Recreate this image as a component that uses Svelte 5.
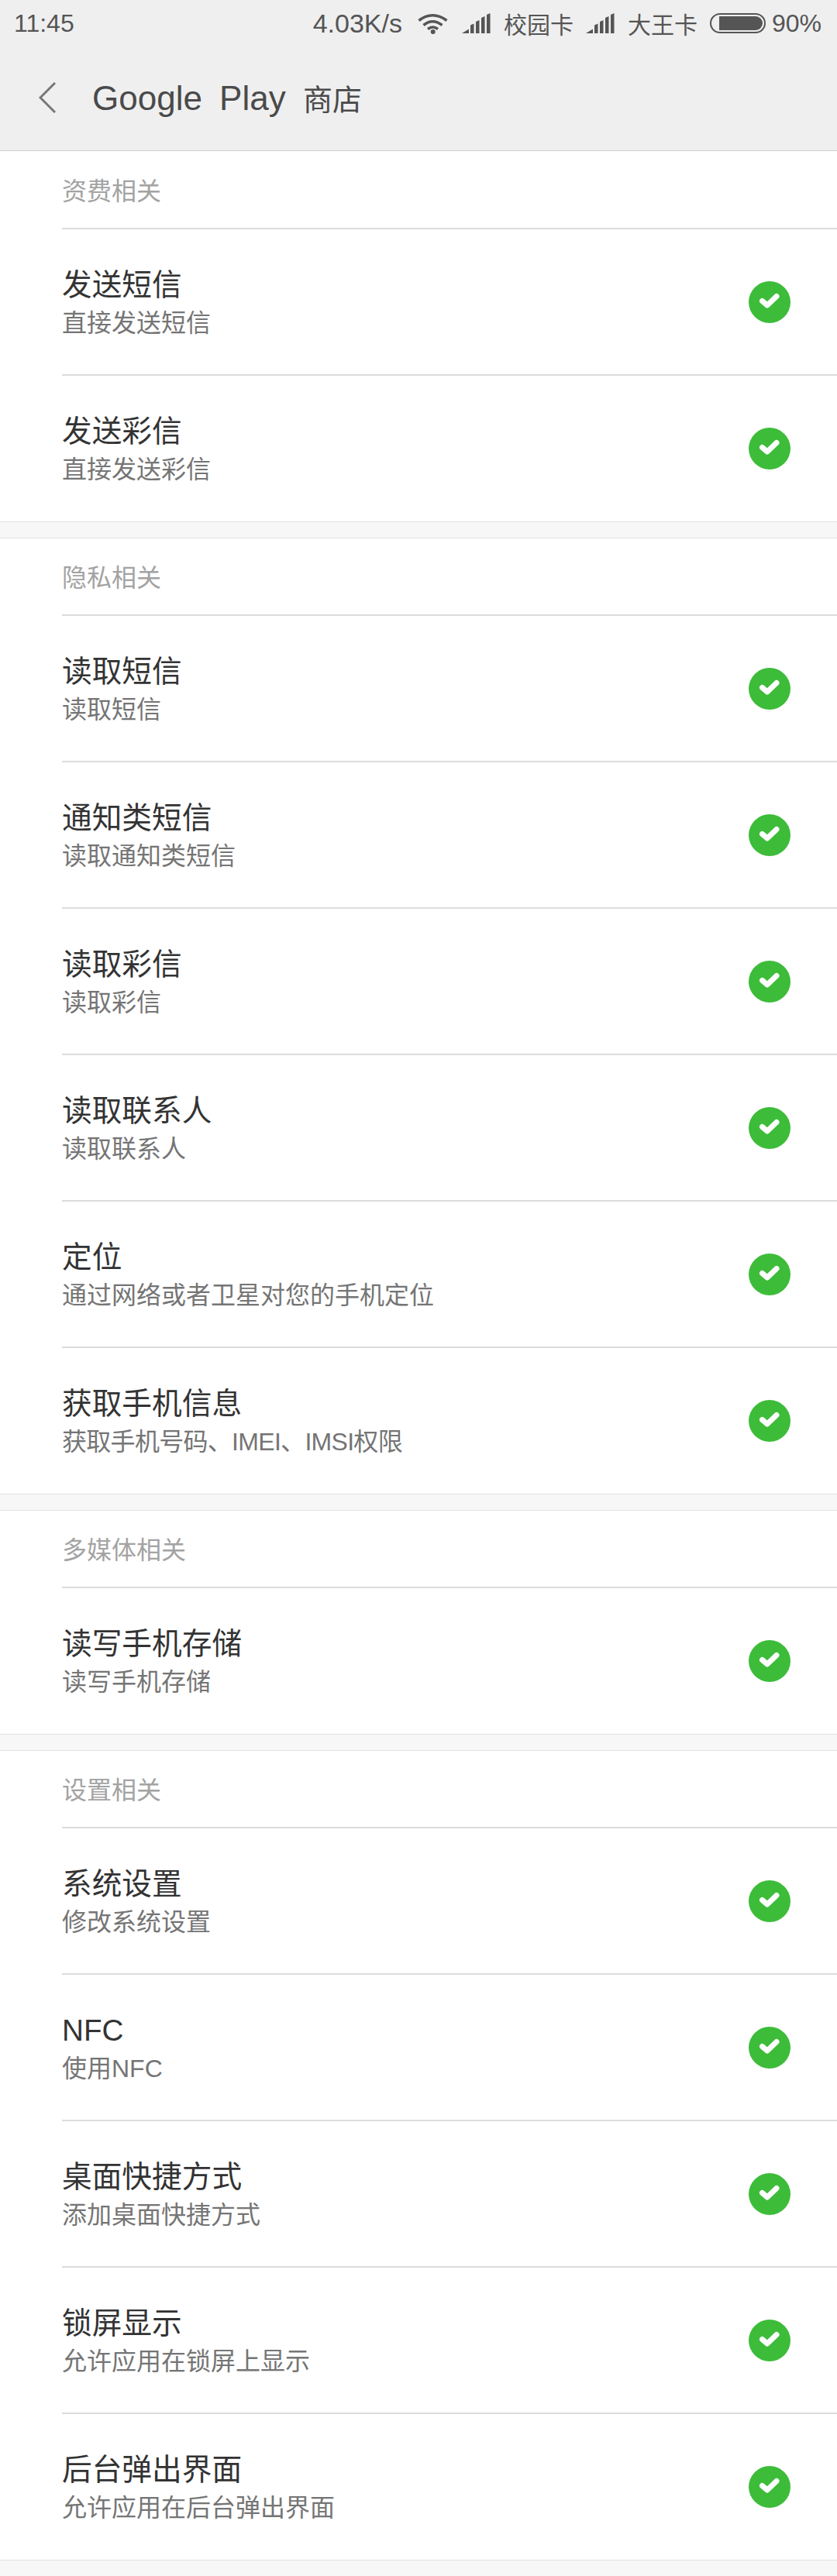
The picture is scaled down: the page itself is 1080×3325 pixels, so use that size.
<script>
  const sections = [
    { title: '资费相关', rows: [['发送短信', '直接发送短信'], ['发送彩信', '直接发送彩信']] },
    { title: '隐私相关', rows: [
      ['读取短信', '读取短信'], ['通知类短信', '读取通知类短信'], ['读取彩信', '读取彩信'],
      ['读取联系人', '读取联系人'], ['定位', '通过网络或者卫星对您的手机定位'], ['获取手机信息', '获取手机号码、IMEI、IMSI权限', true]
    ] },
    { title: '多媒体相关', rows: [['读写手机存储', '读写手机存储']] },
    { title: '设置相关', rows: [
      ['系统设置', '修改系统设置'], ['NFC', '使用NFC'], ['桌面快捷方式', '添加桌面快捷方式'],
      ['锁屏显示', '允许应用在锁屏上显示'], ['后台弹出界面', '允许应用在后台弹出界面']
    ] }
  ];
</script>

{#snippet signal()}
  <svg class="signal" viewBox="0 0 37 26" aria-hidden="true">
    <path d="M0 26 L9 20.5 V26 Z M11 15.5 L15.5 13.5 V26 H11 Z M18 11 L22.5 9 V26 H18 Z M25 6 L29.5 4 V26 H25 Z M32 2 L36.5 0 V26 H32 Z" />
  </svg>
{/snippet}

<div class="page">
  <header class="head">
    <div class="status">
      <span class="time">11:45</span>
      <span class="speed">4.03K/s</span>
      <svg class="wifi" viewBox="0 0 39 27" aria-hidden="true">
        <path d="M1.5 9.5 Q19 -4 37.5 9.5 M7.5 15.5 Q19 6 31.5 15.5 M13 20.5 Q19.5 15.5 26 20.5" />
        <circle cx="19.7" cy="24" r="3" />
      </svg>
      {@render signal()}
      <span class="carrier">校园卡</span>
      {@render signal()}
      <span class="carrier">大王卡</span>
      <span class="battery"><span class="fill"></span></span>
      <span class="pct">90%</span>
    </div>
    <div class="bar">
      <svg class="back" viewBox="0 0 22 40" aria-hidden="true"><path d="M21 1 L2 20 L21 39" /></svg>
      <span class="title">Google Play <span class="cjk">商店</span></span>
    </div>
  </header>

  {#each sections as s}
    <section>
      <h2>{s.title}</h2>
      {#each s.rows as r}
        <div class="row">
          <div class="text">
            <div class="name">{r[0]}</div>
            <div class="desc" class:tight={r[2]}>{r[1]}</div>
          </div>
          <svg class="check" viewBox="0 0 54 54" aria-hidden="true">
            <circle cx="27" cy="27" r="27" />
            <path d="M17.5 25.5 L24 31 L36 19.5" />
          </svg>
        </div>
      {/each}
    </section>
  {/each}
</div>

<style>
  :global(body) { margin: 0; background: #fff; }
  .page {
    width: 1080px; height: 3325px; overflow: hidden; background: #f7f7f7;
    font-family: "Liberation Sans", "Noto Sans CJK SC", sans-serif;
  }
  .head { height: 195px; box-sizing: border-box; background: #efefef; border-bottom: 1px solid #cfcfcf; }
  .status {
    height: 60px; display: flex; align-items: center; padding: 0 20px 0 18px;
    color: #555; font-size: 32px; box-sizing: border-box;
  }
  .time { margin-right: auto; }
  .speed { margin-right: 20px; font-size: 34px; }
  .wifi { width: 39px; height: 27px; margin-right: 18px; }
  .wifi path { fill: none; stroke: #555; stroke-width: 3.6; }
  .wifi circle { fill: #555; }
  .signal { width: 37px; height: 26px; fill: #555; margin-right: 17px; }
  .carrier { font-size: 30px; margin-right: 16px; }
  .battery {
    width: 72px; height: 26px; border: 2px solid #555; border-radius: 13px;
    box-sizing: border-box; padding: 2px; display: flex; margin-right: 8px;
  }
  .fill { flex: 1; background: #555; border-radius: 0 10px 10px 0; margin-left: 8px; }
  .bar { height: 134px; display: flex; align-items: center; padding: 0 0 3px 50px; box-sizing: border-box; }
  .back { width: 22px; height: 40px; margin-right: 47px; }
  .back path { fill: none; stroke: #777; stroke-width: 3; }
  .title { font-size: 44px; color: #4a4a4a; word-spacing: 10px; }
  .cjk { font-size: 38px; }

  section {
    background: #fff; padding-left: 80px; margin-bottom: 20px;
    border-bottom: 1px solid #e2e2e2; border-top: 1px solid #e2e2e2;
  }
  section:first-of-type { border-top-color: transparent; }
  h2 {
    margin: 0; height: 100px; box-sizing: border-box; padding-top: 28px;
    font-size: 32px; line-height: 46px; font-weight: 400; color: #a3a3a3;
    border-bottom: 2px solid #dcdcdc;
  }
  .row {
    height: 189px; box-sizing: border-box; display: flex; align-items: center;
    padding-right: 60px; border-bottom: 2px solid #dcdcdc;
  }
  .row:last-child { border-bottom: 0; height: 188px; }
  .text { flex: 1; margin-top: 2px; }
  .name { font-size: 38.7px; line-height: 50px; color: #333; }
  .desc { font-size: 32px; line-height: 44px; margin-top: 2px; color: #757575; }
  .tight { letter-spacing: -0.7px; }
  .check { width: 54px; height: 54px; }
  .check circle { fill: #3dbc3a; }
  .check path { fill: none; stroke: #fff; stroke-width: 7; stroke-linecap: round; stroke-linejoin: round; }
</style>
